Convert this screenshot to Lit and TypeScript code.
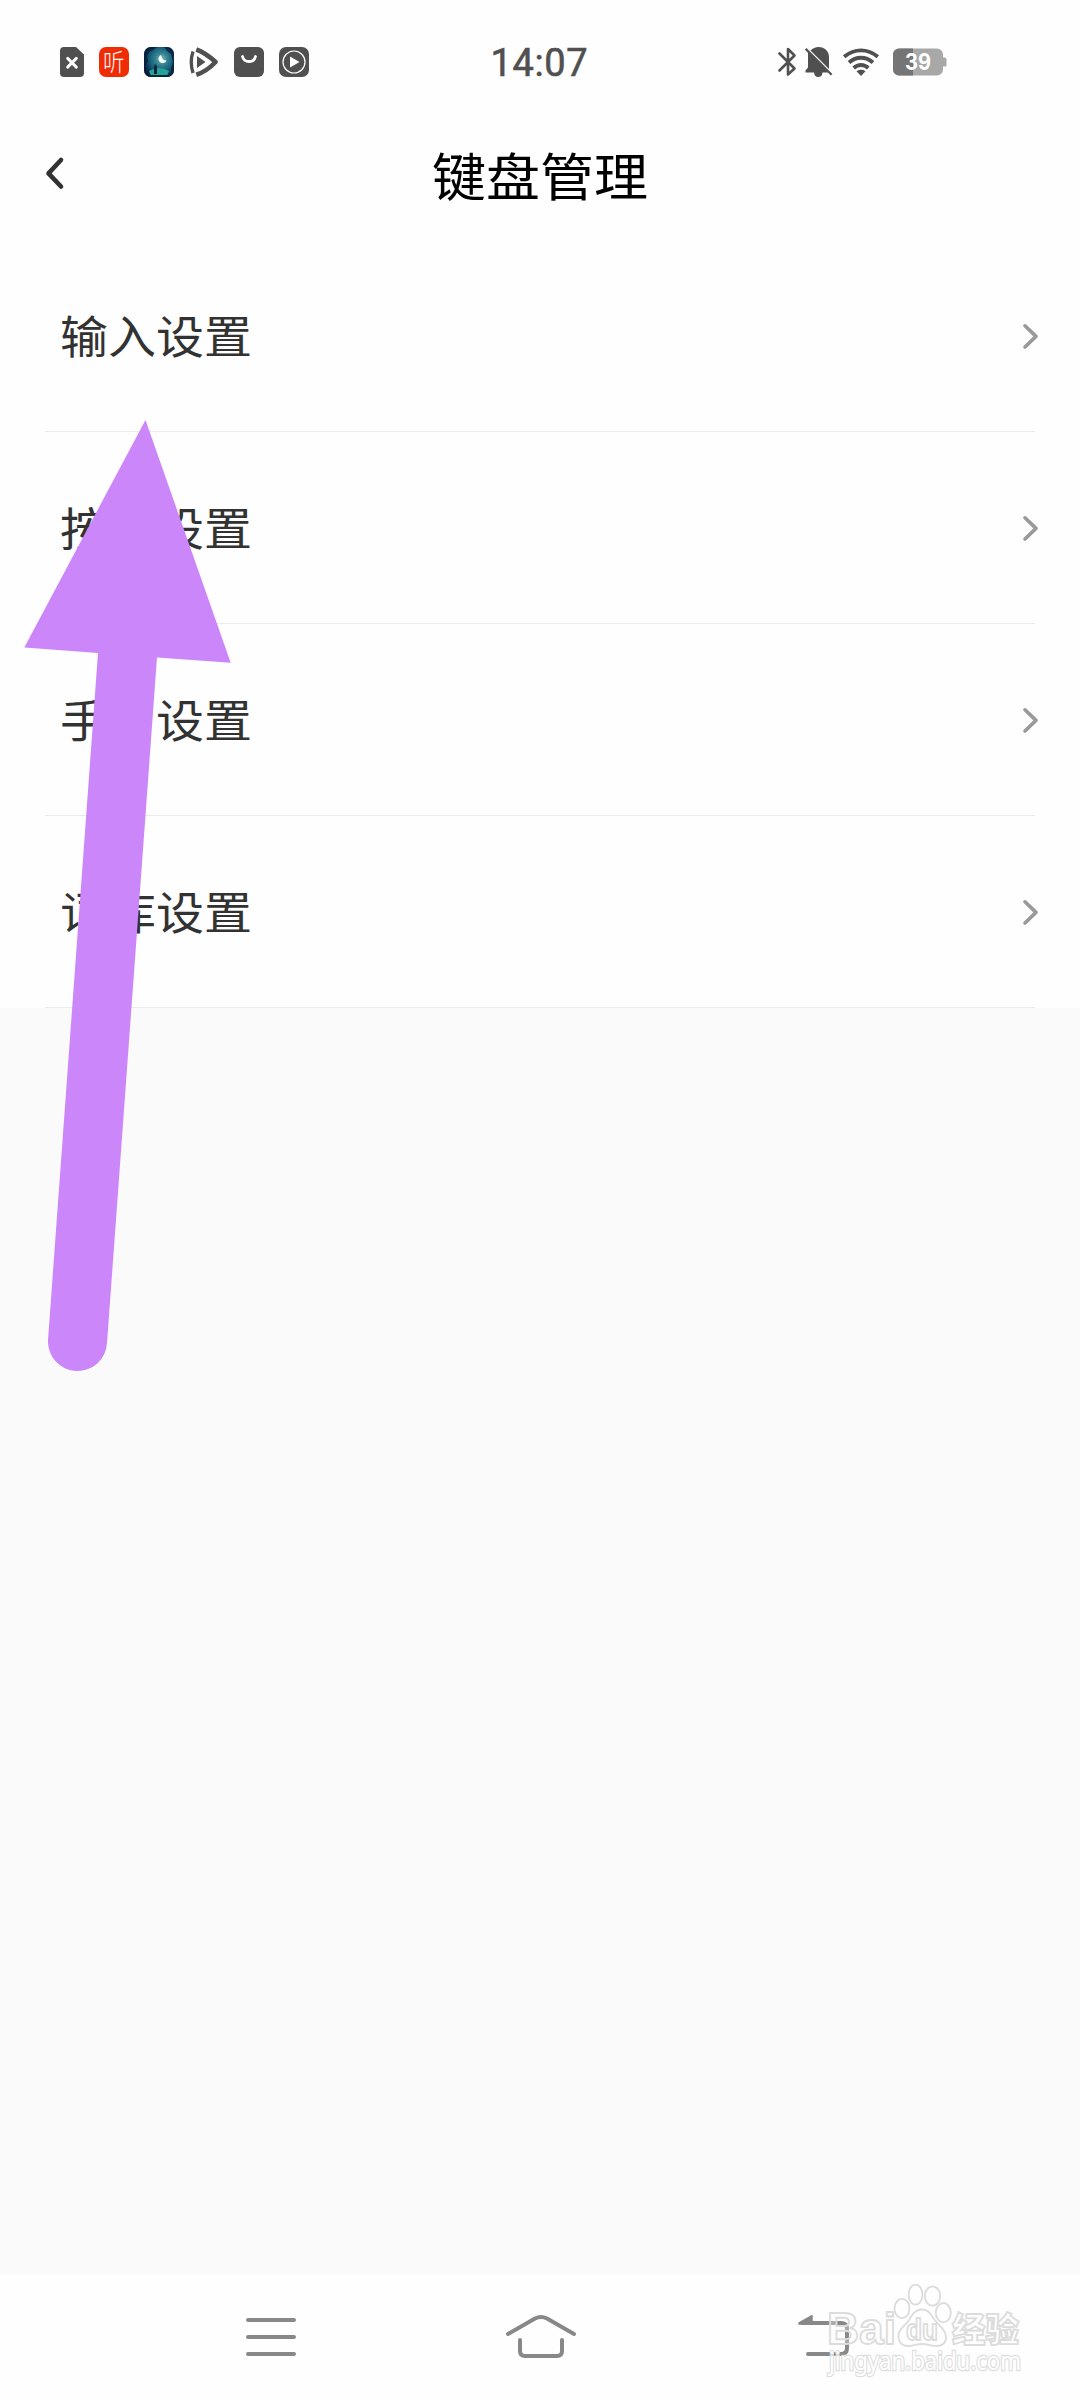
import { LitElement, html, css, svg } from "lit";
import { customElement, property } from "lit/decorators.js";

@customElement("status-bar")
class StatusBar extends LitElement {
  static styles = css`
    :host { display: block; }
    .bar { height: 124px; display: flex; align-items: center; box-sizing: border-box; padding: 0 133px 0 60px; color: #505050; }
    .left { display: flex; align-items: center; gap: 15px; flex: 1; }
    .right { display: flex; align-items: center; }
    svg { display: block; overflow: visible; }
    .time { width: 98px; height: 50px; margin-right: 189px; }
    .time-text { font: 400 38px Roboto, sans-serif; fill: #505050; stroke: #505050; stroke-width: .6; }
    .bell { margin-left: 8px; }
    .wifi { margin-left: 10px; }
    .battery { margin-left: 13px; }
    .level { font: 700 23px Inter, sans-serif; fill: #fff; }
    .listen { font: 300 25px "Noto Sans CJK SC", sans-serif; fill: #fff; }
  `;
  render() {
    return html`<div class="bar">
      <div class="left">
        <svg width="24" height="30" viewBox="0 0 24 30"><path fill="#505050" d="M4 0H16L24 7.500V26a4 4 0 0 1-4 4H4a4 4 0 0 1-4-4V4a4 4 0 0 1 4-4Z"/><path stroke="#fff" stroke-width="3.200" stroke-linecap="round" d="M7.800 11.500l8.400 8.500M16.200 11.500l-8.400 8.500"/></svg>
        <svg width="30" height="30" viewBox="0 0 30 30"><rect width="30" height="30" rx="7" fill="#f02c04"/><text class="listen" transform="translate(4 23.500) scale(.86 .96)">听</text></svg>
        <svg width="30" height="30" viewBox="0 0 30 30">
          <defs>
            <radialGradient id="sky" cx=".58" cy=".4" r=".65"><stop offset="0" stop-color="#85bdb8"/><stop offset=".3" stop-color="#348395"/><stop offset=".62" stop-color="#165b75"/><stop offset="1" stop-color="#061d3a"/></radialGradient>
            <clipPath id="tile"><rect width="30" height="30" rx="7"/></clipPath>
          </defs>
          <g clip-path="url(#tile)"><rect width="30" height="30" fill="url(#sky)"/>
          <path fill="#061d3a" fill-opacity=".8" d="M0 0H13L9 3 5 5 3 9 4 14 2 18 2 23 5 30H0ZM20 0H30V30H28L27 22 29 15 27 7 23 4Z"/>
          <path fill="#25a09b" d="M5 24q10-6 20 0l-2 5H7Z"/><path fill="#062535" d="M0 28h30v2H0ZM10 27v-7l1-3 2 2v8Z"/>
          <path fill="#f6fbef" d="M17 8a4.200 4.200 0 1 0 5.500 5.500q-4.500 0-5.500-5.500Z"/></g>
        </svg>
        <svg width="30" height="30" viewBox="0 0 30 30"><path fill="none" stroke="#505050" stroke-width="4.600" stroke-linejoin="round" d="M7.300 2.500Q16 5.500 26.600 15Q17.500 24.500 7.300 27.800"/><path fill="none" stroke="#505050" stroke-width="3.300" d="M4 4.500q-3.500 10.500 0 21.500"/><path fill="#505050" d="M8 9L16.500 15 8 21Z"/></svg>
        <svg width="30" height="30" viewBox="0 0 30 30"><rect width="30" height="30" rx="6" fill="#505050"/><path fill="none" stroke="#fff" stroke-width="2.800" stroke-linecap="round" d="M8.500 9.500q1.200 5 6.500 5t6.500-5"/></svg>
        <svg width="30" height="30" viewBox="0 0 30 30"><rect width="30" height="30" rx="7" fill="#505050"/><circle cx="15" cy="15" r="11" fill="none" stroke="#fff" stroke-width="1.200"/><path fill="#fff" d="M11 9.500L20.500 15 11 20.500Z"/></svg>
      </div>
      <svg class="time" viewBox="0 0 98 50"><text class="time-text" x="-.5" y="38.500" textLength="97" lengthAdjust="spacing">14:07</text></svg>
      <div class="right">
        <svg width="19" height="30" viewBox="0 0 19 30"><path fill="none" stroke="#505050" stroke-width="2.600" stroke-linejoin="round" stroke-linecap="round" d="M1.500 6.500L16.500 21.500 10 27.500V2L16.500 8.500 1.500 23.500"/></svg>
        <svg class="bell" width="28" height="30" viewBox="0 0 28 30"><path fill="#505050" d="M5.500 3.500Q9 0 13.500 0C20 0 24 4.500 24 10V22ZM3 5L23.500 25.500H17.500Q17 30 13.300 30T9 25.500H.5V23.500L3 20.500Z"/><path stroke="#505050" stroke-width="2.200" d="M.7 1.900L26.600 27.700"/></svg>
        <svg class="wifi" width="36" height="28" viewBox="0 0 36 28"><g fill="none" stroke="#505050" stroke-width="3.900"><path d="M1.200 8.800Q9 2.400 18 2.400T34.800 8.800"/><path d="M6 14.500Q11.500 9.800 18 9.800T30 14.500"/><path d="M10.700 20Q14 17 18 17T25.300 20"/></g><path fill="#505050" d="M13.500 23.200Q18 20.500 22.500 23.200L18 28Z"/></svg>
        <svg class="battery" width="55" height="28" viewBox="0 0 55 28"><path fill="#a8a8a8" d="M7 0.500H45a6 6 0 0 1 6 6V9.500h2q1.500 0 1.500 1.500v6q0 1.500-1.500 1.500h-2V21.500a6 6 0 0 1-6 6H7a6 6 0 0 1-6-6V6.500a6 6 0 0 1 6-6Z"/><path fill="#757575" d="M21 .5H7a6 6 0 0 0-6 6v15a6 6 0 0 0 6 6H21Z"/><text class="level" x="13" y="22.300" textLength="26" lengthAdjust="spacingAndGlyphs">39</text></svg>
      </div>
    </div>`;
  }
}

@customElement("setting-row")
class SettingRow extends LitElement {
  @property() label = "";
  static styles = css`
    :host { display: block; }
    .row { height: 192px; box-sizing: border-box; margin: 0 45px; padding: 0 0 0 15px; border-bottom: 1px solid #ebebeb; display: flex; align-items: center; justify-content: space-between; }
    .label { font: 400 48px/70px "Noto Sans CJK SC", sans-serif; color: #323232; margin-bottom: 4px; transform: scaleY(.95); }
    .chevron { display: block; margin-right: -4px; }
  `;
  render() {
    return html`<div class="row"><span class="label">${this.label}</span>
      <svg class="chevron" width="18" height="28" viewBox="0 0 18 28"><path fill="none" stroke="#999" stroke-width="3.600" stroke-linecap="round" stroke-linejoin="round" d="M4 3.800L15 14.400 4 25"/></svg></div>`;
  }
}

@customElement("nav-bar")
class NavBar extends LitElement {
  static styles = css`
    :host { display: block; }
    .nav { height: 126px; box-sizing: border-box; padding: 38px 228px 0 244px; display: grid; grid-template-columns: 260px 292px 56px; align-items: start; background: #fefefe; }
    .icon { display: block; fill: none; stroke: #888; stroke-width: 4; stroke-linecap: round; stroke-linejoin: round; }
  `;
  render() {
    return html`<div class="nav">
      <svg class="icon" width="54" height="48" viewBox="244 2312 54 48"><path d="M248 2320H294M248 2337H294M248 2354H294"/></svg>
      <svg class="icon" width="74" height="48" viewBox="504 2312 74 48"><path d="M508 2334L535 2318.500Q541 2315.500 547 2318.500L574 2334M520 2340V2351Q520 2356 525 2356H557Q562 2356 562 2351V2340"/></svg>
      <svg class="icon" width="56" height="48" viewBox="796 2312 56 48"><path d="M802 2323H841Q847 2323 847 2329V2348Q847 2354 841 2354H808"/><path fill="#888" stroke-width="1.500" d="M799 2323L812 2315.700V2324H799Z"/></svg>
    </div>`;
  }
}

@customElement("app-root")
class AppRoot extends LitElement {
  static styles = css`
    :host { display: block; }
    .page { position: relative; width: 1080px; height: 2400px; overflow: hidden; display: flex; flex-direction: column; background: #fafafa; }
    .top { background: #fefefe; }
    .header { height: 116px; box-sizing: border-box; padding: 0 44px 12px; display: grid; grid-template-columns: 40px 1fr 40px; align-items: center; }
    .back { display: block; margin-top: -6px; }
    .title { margin: 0 0 5px; text-align: center; font: 400 54px/80px "Noto Sans CJK SC", sans-serif; color: #000; transform: scaleY(.95); }
    .space { flex: 1; }
    .overlay { position: absolute; left: 0; top: 0; pointer-events: none; }
    .mark { fill: #fff; fill-opacity: .3; stroke: #dcdcdc; stroke-width: 1.800; }
    .brand { font: 700 44px "Liberation Sans", sans-serif; }
    .du { font: 700 29px "Liberation Sans", sans-serif; }
    .cn { font: 900 34px "Noto Sans CJK SC", sans-serif; }
    .url { font: 400 25px "Noto Sans", sans-serif; fill: #fff; fill-opacity: 1; stroke: #dedede; stroke-width: 2.600; paint-order: stroke; }
  `;
  private rows = ["输入设置", "按键设置", "手写设置", "词库设置"];
  render() {
    return html`<div class="page">
      <div class="top">
        <status-bar></status-bar>
        <div class="header">
          <svg class="back" width="22" height="34" viewBox="0 0 22 34"><path fill="none" stroke="#323232" stroke-width="4.600" stroke-linecap="round" stroke-linejoin="round" d="M17 4L4.500 17.300 17 30.500"/></svg>
          <h1 class="title">键盘管理</h1>
        </div>
        ${this.rows.map((r) => html`<setting-row .label=${r}></setting-row>`)}
      </div>
      <div class="space"></div>
      <nav-bar></nav-bar>
      <svg class="overlay" width="1080" height="2400" viewBox="0 0 1080 2400">
        <path fill="#cb86fa" d="M145.500 420L230.700 662.700 157 657.500 107 1343A29.500 29.500 0 0 1 48 1340L98 653 24.300 647.500Z"/>
        ${svg`<g class="mark">
          <text class="brand" x="827" y="2344" textLength="69" lengthAdjust="spacingAndGlyphs">Bai</text>
          <ellipse cx="902" cy="2308.500" rx="7.500" ry="9.700"/><ellipse cx="915.500" cy="2294.700" rx="7" ry="10"/>
          <ellipse cx="932.500" cy="2296" rx="7.700" ry="9.700"/><ellipse cx="943.300" cy="2312.700" rx="7.500" ry="9.700"/>
          <path d="M922 2309.500C929 2309.500 931 2315 934 2319C938 2325 946 2329 946 2337C946 2343 942 2346 936 2346C931 2346 928 2344 922 2344C916 2344 913 2346 908 2346C902 2346 898 2342 898.500 2335C899 2329 905 2326 909 2320C912 2315 915 2309.500 922 2309.500Z"/>
          <text class="du" x="906" y="2340" textLength="32" lengthAdjust="spacingAndGlyphs">du</text>
          <text class="cn" x="952" y="2342" textLength="67" lengthAdjust="spacingAndGlyphs">经验</text>
          <text class="url" x="829" y="2370" textLength="192" lengthAdjust="spacingAndGlyphs">jingyan.baidu.com</text>
        </g>`}
      </svg>
    </div>`;
  }
}
